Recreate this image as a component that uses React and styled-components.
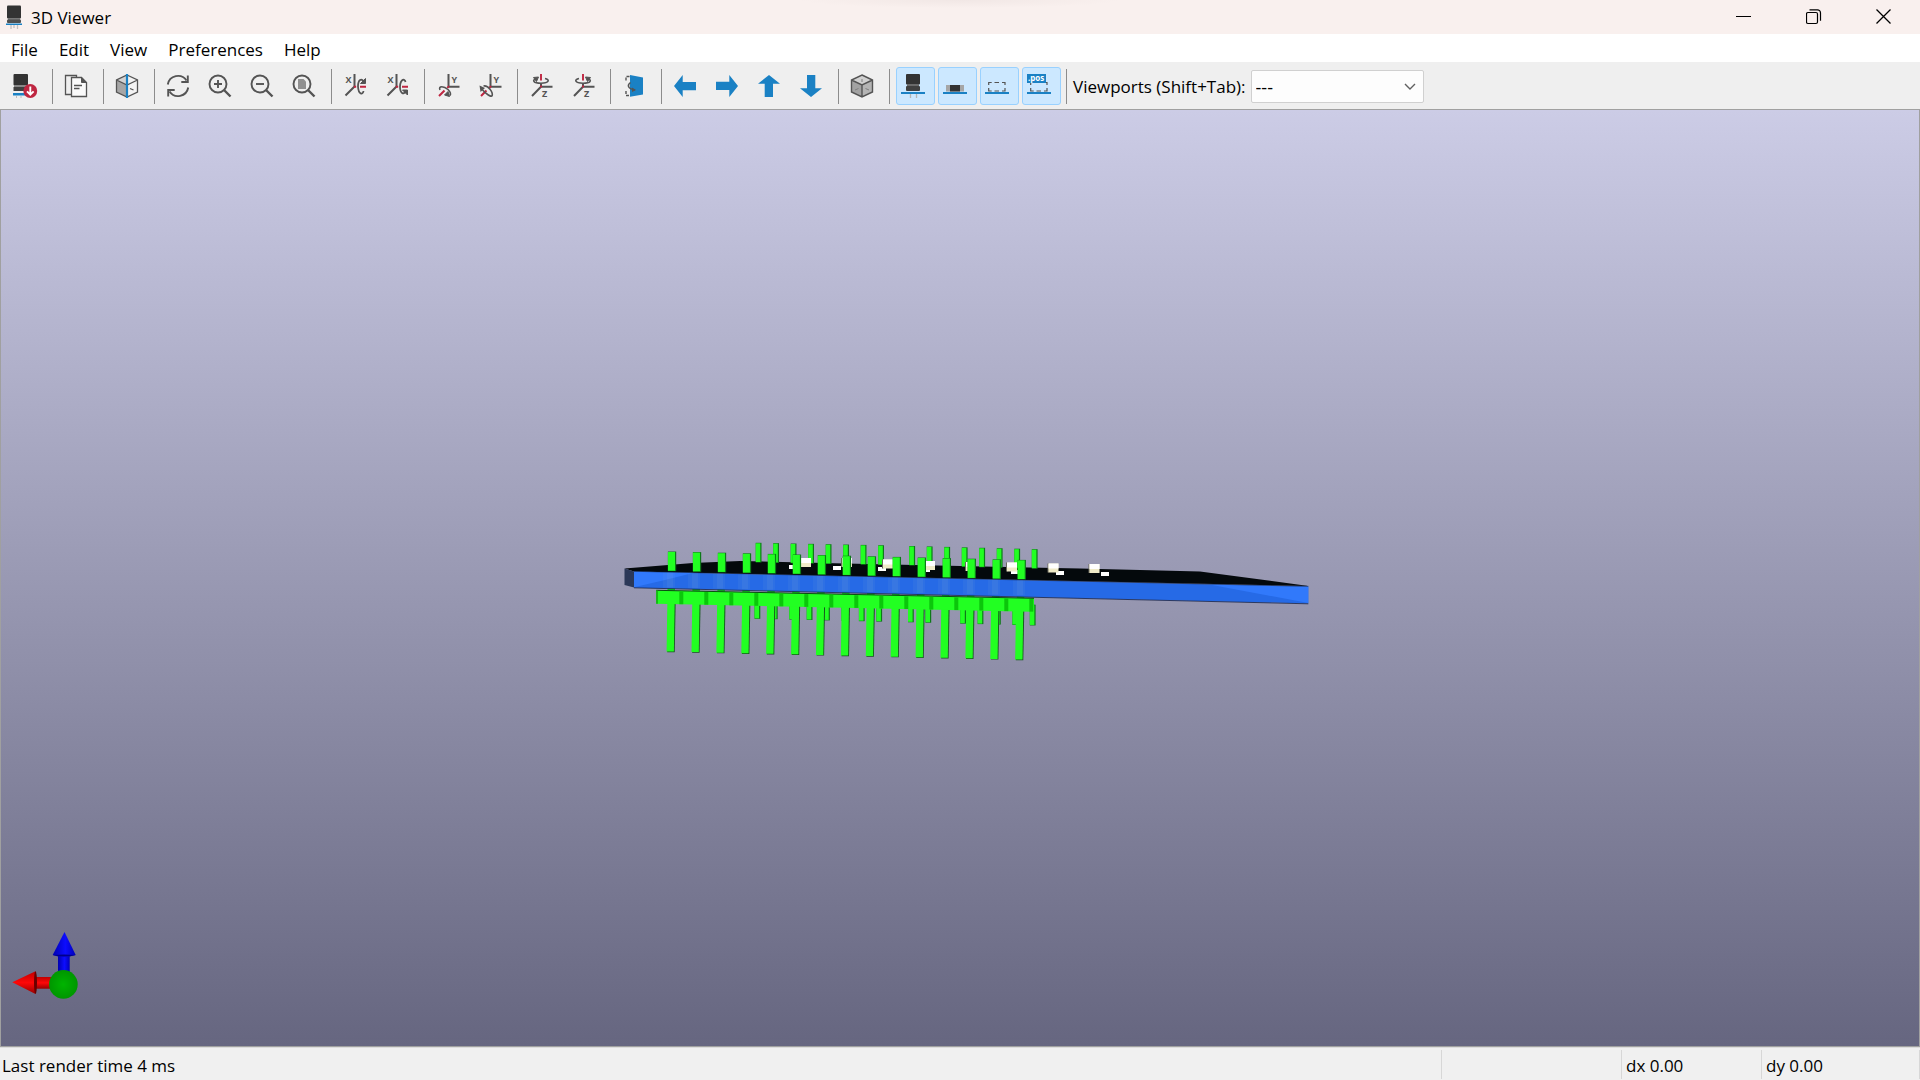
import React, { useState } from "react";
import styled, { createGlobalStyle } from "styled-components";

const INK = "#545454";
const BLUE = "#1a81c4";
const RED = "#bf2641";
const GREEN = "#22ff22";

const GlobalStyle = createGlobalStyle`
  * { box-sizing: border-box; }
  body { margin: 0; background: #f0f0f0; }
`;

const Window = styled.div`
  display: flex;
  flex-direction: column;
  height: 100vh;
  font-family: "Segoe UI", "Open Sans", "Noto Sans", sans-serif;
  font-size: 17px;
  line-height: 24px;
  color: #000;
`;

const TitleBar = styled.header`
  display: flex;
  align-items: center;
  height: 34px;
  padding: 0 1px 0 2px;
  background: radial-gradient(closest-side, #f1e7e5, #f9f0ee) center -8px / 320px 16px no-repeat #f9f0ee;
`;

const Title = styled.h1`
  flex: 1;
  margin: 0 0 0 5px;
  padding-top: 2px;
  font-size: 17px;
  font-weight: 400;
  line-height: 24px;
`;

const CaptionButton = styled.button`
  display: flex;
  align-items: center;
  justify-content: center;
  width: 70px;
  height: 34px;
  padding: 0;
  border: 0;
  background: transparent;
`;

const MenuBar = styled.nav`
  display: flex;
  height: 28px;
  background: #fff;
`;

const MenuItem = styled.button`
  padding: 4px 10px 0 11px;
  border: 0;
  background: transparent;
  font: inherit;
  color: inherit;
`;

const ToolBar = styled.div`
  display: flex;
  align-items: center;
  height: 47px;
  padding: 1px 8px 0;
  background: #efefef;
`;

const ToolButton = styled.button`
  display: flex;
  align-items: center;
  width: 39px;
  height: 38px;
  margin-right: 3px;
  padding: 0 0 0 4px;
  border: 1px solid ${(p) => (p.$on ? "#99d1ff" : "transparent")};
  border-radius: 3px;
  background: ${(p) => (p.$on ? "#cce8ff" : "transparent")};
`;

const Separator = styled.span`
  width: 1px;
  height: 35px;
  margin: 0 6px 0 2px;
  background: #8c8c8c;
`;

const ViewLabel = styled.label`
  margin-right: 5px;
  padding-top: 2px;
  white-space: nowrap;
`;

const SelectBox = styled.div`
  display: grid;
  align-items: center;
  width: 173px;
  & > * { grid-area: 1 / 1; }
  & > svg { justify-self: end; margin: 2px 8px 0 0; pointer-events: none; }
`;

const Select = styled.select`
  appearance: none;
  width: 100%;
  height: 33px;
  padding: 2px 28px 0 4px;
  border: 1px solid #d0d0d0;
  border-radius: 2px;
  background: #fdfdfd;
  font: inherit;
  font-size: 18px;
  color: inherit;
`;

const Canvas = styled.main`
  flex: 1;
  min-height: 0;
  border: 1px solid #a0a0a0;
  background: linear-gradient(#cccce6, #666680);
`;

const Scene = styled.svg`
  display: block;
  width: 100%;
  height: 100%;
`;

const StatusBar = styled.footer`
  display: flex;
  height: 33px;
  padding: 2px 0 1px;
  border-top: 1px solid #dcdcdc;
  background: #f0f0f0;
`;

const StatusField = styled.div`
  flex: ${(p) => (p.$width ? `0 0 ${p.$width}px` : "1")};
  padding: 5px 2px 0 ${(p) => (p.$width ? 4 : 2)}px;
  border-right: 1px solid #d7d7d7;
  line-height: 22px;
`;

const Icon = styled.svg`
  display: block;
  flex: none;
  overflow: visible;
`;

const AxisLetter = styled.text`
  font-family: "Open Sans", sans-serif;
  font-size: 9px;
  font-weight: 700;
  fill: ${INK};
`;

const PosText = styled.text`
  font-family: "Open Sans", sans-serif;
  font-size: 8px;
  font-weight: 700;
  fill: #fff;
`;

const Svg = ({ children }) => (
  <Icon width="24" height="24" viewBox="0 0 24 24" fill="none" aria-hidden="true">
    {children}
  </Icon>
);

const Capacitor = () => (
  <Svg>
    <path d="M9.5 20v4M15.5 20v4" stroke="#b4b4b4" strokeWidth="1.3" />
    <rect x="5" y="0" width="14" height="10.5" rx="1" fill="#333" />
    <rect x="6" y="10" width="12" height="2.5" fill="#6a6a6a" />
    <rect x="5" y="12" width="14" height="5" rx="1" fill="#404040" />
    <rect y="18" width="24" height="2" fill={BLUE} />
  </Svg>
);

const AppMark = () => (
  <Svg>
    <path d="M9 20v4M12 20v3M15.5 20v4" stroke="#c4c0c0" strokeWidth="1.3" />
    <rect x="5" y="0.5" width="14" height="13" rx="1" fill="#333" />
    <rect x="6" y="13" width="12" height="2" fill="#777" />
    <rect x="5" y="14.5" width="14" height="3.5" rx="1" fill="#505050" />
    <rect x="4" y="18.5" width="16" height="1.5" fill={BLUE} />
  </Svg>
);

const Reload = () => (
  <Svg>
    <path d="M3.5 22v2M8 22v2" stroke="#bdbdbd" />
    <rect x="0.5" y="0" width="14.5" height="11.5" rx="1" fill="#333" />
    <rect x="1" y="11" width="13" height="2.5" fill="#888" />
    <rect x="0.5" y="13" width="14" height="4" fill="#404040" />
    <rect x="0" y="19" width="13" height="2.5" fill={BLUE} />
    <circle cx="17.3" cy="17" r="6.9" fill={RED} />
    <path d="M17.3 12.5v7.5M14 17.3l3.3 3.4 3.3-3.4" stroke="#fff" strokeWidth="1.9" />
  </Svg>
);

const Copy = () => (
  <Svg>
    <path d="M7.5 20.5H1.5V1.5h11v2" stroke={INK} strokeWidth="1.3" />
    <path d="M7.5 3.5h10l5 5v14h-15z" fill="#fafafa" stroke={INK} strokeWidth="1.3" />
    <path d="M17.5 3.5v5h5z" fill={INK} stroke={INK} />
    <path d="M10 11.5h8M10 14.5h5.5" stroke={INK} strokeWidth="1.3" />
  </Svg>
);

const RaytraceCube = () => (
  <Svg>
    <path d="M12 1L1.5 6v12L12 23z" fill="#a6a6a6" />
    <path d="M12 1L1.5 6 12 11z" fill="#d2d2d2" />
    <path d="M12 1l10.5 5v12L12 23z" fill="#f3f3f3" />
    <path d="M12 1l10.5 5v12L12 23 1.5 18V6zM1.5 6L12 11l10.5-5M15 14.5l3.5 1.5" stroke={INK} strokeWidth="1.3" />
    <path d="M12 0v24" stroke={BLUE} strokeWidth="2.2" />
  </Svg>
);

const Refresh = () => (
  <Svg>
    <path d="M1.8 10.5A10.3 10.3 0 0 1 20.5 6.5M22.2 13.5A10.3 10.3 0 0 1 3.5 17.5" stroke={INK} strokeWidth="1.9" />
    <path d="M21.8 1.5V8H15.3M2.2 22.5V16H8.7" stroke={INK} strokeWidth="1.9" />
  </Svg>
);

const Zoom = ({ kind }) => (
  <Svg>
    <circle cx="10" cy="10" r="8.5" stroke={INK} strokeWidth="1.9" />
    <path d="M16 16l6.5 6.5" stroke={INK} strokeWidth="2.4" />
    {kind === "fit" ? (
      <path d="M6 5h5.5L14 7.5V15H6z" fill="#909090" />
    ) : (
      <path d={kind === "in" ? "M6 10h8M10 6v8" : "M6 10h8"} stroke={INK} strokeWidth="1.9" />
    )}
  </Svg>
);

const RotateX = ({ back }) => (
  <Svg>
    <AxisLetter x="2.5" y="9">X</AxisLetter>
    <path d="M11.5 0v12.5L2.5 21.5" stroke={INK} strokeWidth="2" />
    <path d="M10.8 12.7h2.4M17 12.7h6" stroke={RED} strokeWidth="1.9" />
    {back ? (
      <>
        <path d="M20.5 8C20 4.5 15.5 4.5 15 12.5c0 7 3.8 8.5 5.5 5" stroke={INK} strokeWidth="1.8" />
        <path d="M17.5 16h5v5z" fill={INK} stroke={INK} />
      </>
    ) : (
      <>
        <path d="M20.5 17C20 21 15.5 21 15 12.5c0-7 3.8-8.5 5.5-5" stroke={INK} strokeWidth="1.8" />
        <path d="M17.5 9.5h5v-5z" fill={INK} stroke={INK} />
      </>
    )}
  </Svg>
);

const RotateY = ({ back }) => (
  <Svg>
    <AxisLetter x="15.5" y="9">Y</AxisLetter>
    <path d="M12.5 0v12.7h11" stroke={INK} strokeWidth="2" />
    <path d="M3 22l5.5-5.5M11.3 13.9l1.8-1.8" stroke={RED} strokeWidth="2" />
    {back ? (
      <>
        <path d="M5.5 12c5-1 9.5 6.5 8.7 9.5-1 2.5-7-2.5-10-6" stroke={INK} strokeWidth="1.6" />
        <path d="M1.5 11.5l1 6.5 4.5-4z" fill={INK} />
      </>
    ) : (
      <>
        <path d="M4 16c-2-4.5 4-4 8-.5 2.5 2.5 3 4.5 2 6" stroke={INK} strokeWidth="1.6" />
        <path d="M8.5 21l3.5-3.5 1.5 5z" fill={INK} stroke={INK} />
      </>
    )}
  </Svg>
);

const RotateZ = ({ back }) => (
  <Svg>
    <AxisLetter x="13" y="23">Z</AxisLetter>
    <path d="M12 10v2.7h11.5M12 12.7L3 22" stroke={INK} strokeWidth="2" />
    <path d="M12 0v6.5M12 11.5v2" stroke={RED} strokeWidth="1.9" />
    <path
      d={back ? "M8 4.5C3 5.5 3.5 9.2 12 9.2c8 0 9-3.2 5-4.4" : "M16 4.5c5 1 4.5 4.7-4 4.7C4 9.2 3 6 7 4.8"}
      stroke={INK}
      strokeWidth="1.6"
    />
    <path d={back ? "M14.5 3l5 .5-3 4z" : "M9.5 3l-5 .5 3 4z"} fill={INK} stroke={INK} />
  </Svg>
);

const Flip = () => (
  <Svg>
    <path d="M7.5 2.5H4V7M4 17v4.5h3.5" stroke={INK} strokeWidth="1.4" strokeDasharray="3 1.5" />
    <path d="M8 1l13 2.5v17L8 22.8z" fill={BLUE} />
    <path d="M8.5 8.5C5 11 5.5 15 13 16" stroke={INK} strokeWidth="1.5" />
    <path d="M10 13.5l4 2.5-4 2z" fill={INK} />
  </Svg>
);

const Arrow = ({ turn = 0 }) => (
  <Svg>
    <path transform={`rotate(${turn} 12 12)`} d="M1 12L9.7 1v7H23v8.3H9.7V23z" fill={BLUE} />
  </Svg>
);

const OrthoCube = () => (
  <Svg>
    <path d="M12 1L1.5 6v12L12 23l10.5-5V6z" fill="#b4b4b4" />
    <path d="M12 1L1.5 6 12 11l10.5-5z" fill="#d0d0d0" />
    <path d="M1.5 6L12 11v12L1.5 18z" fill="#a2a2a2" />
    <path d="M12 1l10.5 5v12L12 23 1.5 18V6zM1.5 6L12 11l10.5-5M12 11v12" stroke={INK} strokeWidth="1.4" />
    <path d="M12 5v3M5 16l3.5-1.5M15.5 14.5L19 16" stroke="#808080" />
  </Svg>
);

const SmdPart = () => (
  <Svg>
    <rect x="3" y="11" width="18" height="6.5" fill="#a6a6a6" />
    <rect x="7" y="11" width="10" height="6.5" fill="#333" />
    <rect y="18" width="24" height="2" fill={BLUE} />
  </Svg>
);

const VirtualPart = ({ pos }) => (
  <Svg>
    <path
      d="M3.7 11V8.5h3M9.5 8.5h4.5M17 8.5h3V11M20 14v3h-3M14 17H9.5M6.7 17h-3v-3"
      stroke={INK}
      strokeWidth="1.2"
    />
    <rect y="18" width="24" height="2" fill={BLUE} />
    {pos && (
      <>
        <rect width="19" height="9" fill={BLUE} />
        <PosText x="1" y="7">.pos</PosText>
      </>
    )}
  </Svg>
);

const GROUPS = [
  [["Reload board", <Reload />]],
  [["Copy 3D image to clipboard", <Copy />]],
  [["Render with raytracing", <RaytraceCube />]],
  [
    ["Redraw", <Refresh />],
    ["Zoom in", <Zoom kind="in" />],
    ["Zoom out", <Zoom kind="out" />],
    ["Zoom to fit", <Zoom kind="fit" />],
  ],
  [
    ["Rotate X clockwise", <RotateX />],
    ["Rotate X counterclockwise", <RotateX back />],
  ],
  [
    ["Rotate Y clockwise", <RotateY />],
    ["Rotate Y counterclockwise", <RotateY back />],
  ],
  [
    ["Rotate Z clockwise", <RotateZ />],
    ["Rotate Z counterclockwise", <RotateZ back />],
  ],
  [["Flip board", <Flip />]],
  [
    ["Pan left", <Arrow />],
    ["Pan right", <Arrow turn={180} />],
    ["Pan up", <Arrow turn={90} />],
    ["Pan down", <Arrow turn={270} />],
  ],
  [["Orthographic projection", <OrthoCube />]],
];

const TOGGLES = [
  ["Through-hole models", <Capacitor />],
  ["SMD models", <SmdPart />],
  ["Virtual models", <VirtualPart />],
  ["Models not in position file", <VirtualPart pos />],
];

const range = (n) => Array.from({ length: n }, (_, i) => i);

const CHIPS = [
  [801, 558], [842, 558], [883, 559.5], [925, 561], [966, 562], [1007, 562.5], [1048.5, 563.5], [1089.5, 564],
];
const PADS = [
  [789, 565, 5], [833, 566, 8], [878, 567, 8], [925, 568, 5], [968, 569, 5], [1011, 570, 7], [1056, 571, 8], [1101, 572, 8],
];

const Pin = ({ x, top, bottom, width }) => (
  <g>
    <rect x={x} y={top - 0.5} width={width + 0.5} height={bottom - top + 1} fill="#0d7a18" />
    <rect x={x} y={top} width={width - 0.7} height={bottom - top} fill={GREEN} />
  </g>
);

const backRow = (start, top, bottom, step, pitch = 17.5) =>
  range(8).map((i) => (
    <Pin key={`${start}-${i}`} x={start + i * pitch} top={top + i * step} bottom={bottom + i * step} width={5.3} />
  ));

const Board = () => (
  <g>
    {backRow(754.5, 600, 618.3, 0.4, 17.4)}
    {backRow(908, 602, 621.8, 0.45, 17.4)}
    <path d="M624.5 568.5L693 563l47-2 105 2.5 235 5 120 3 108.5 14.5L634 571.5z" fill="#04090c" />
    {PADS.map(([x, y, w]) => (
      <rect key={x} x={x} y={y} width={w} height="4" fill="#fff" />
    ))}
    {backRow(755.7, 543.3, 562, 0.35)}
    {backRow(909.3, 546.5, 565, 0.45)}
    {CHIPS.map(([x, y]) => (
      <g key={x}>
        <rect x={x - 1} y={y} width="1.5" height="9" fill="#6b695c" />
        <rect x={x} y={y} width="10" height="9" fill="#f0ebc8" />
        <rect x={x} y={y} width="10" height="5" fill="#fff" />
      </g>
    ))}
    <path d="M624.5 568.5l9.5 3v16l-9.5-2.5z" fill="#2b3858" />
    {range(15).map((i) => (
      <Pin key={i} x={667.9 + i * 24.98} top={552 + i * 0.6} bottom={570.7 + i * 0.6} width={7.8} />
    ))}
    {range(15).map((i) => (
      <rect key={i} x={667.5 + i * 24.95} y={586 + i * 0.6} width="7.5" height="6" fill="#12c41a" />
    ))}
    <path d="M634 571.5l674.3 15v17L634 587.7z" fill="#266ae6" />
    <path d="M634 571.5l60 1.3-28 7-32 7.5zM1208 584.3l100.3 2.2v16.5z" fill="#3179fb" />
    <path d="M634 571.3l674.3 15" stroke="#0b1a38" strokeWidth="0.6" />
    <path d="M634 587.8l674.3 16" stroke="#1a2547" strokeWidth="0.8" />
    {range(15).map((i) => (
      <g key={i} fill="#78a5dc">
        <path d={`M${663 + i * 25} ${572.6 + i * 0.55}h12v15h-12z`} fillOpacity="0.1" />
        <path d={`M${667 + i * 25} ${572.6 + i * 0.55}h6v15h-6z`} fillOpacity="0.14" />
      </g>
    ))}
    {range(15).map((i) => (
      <g key={i}>
        <path d={`M${668.2 + i * 24.9} ${600.5 + i * 0.57}h7.5l-1 51.7h-7.5z`} fill="#17551d" />
        <path d={`M${667.4 + i * 24.9} ${600 + i * 0.57}h7.3l-0.8 51.5h-7.3z`} fill={GREEN} />
      </g>
    ))}
    <path d="M656.3 590.3L1034 598.3v13.5L656.3 603.8z" fill={GREEN} />
    <path d="M656.3 590.3L1034 598.3" stroke="#0a4d12" strokeWidth="1" />
    <path d="M657 590.3v13.5" stroke="#0da80d" strokeWidth="1.5" />
    {range(15).map((i) => (
      <rect key={i} x={679.3 + i * 25} y={591.5 + i * 0.53} width="4" height="12.7" fill="#0bc60b" />
    ))}
  </g>
);

const Gizmo = () => (
  <g>
    <defs>
      <linearGradient id="blueShade">
        <stop offset="0" stopColor="#0000b0" />
        <stop offset="0.55" stopColor="#0d0dff" />
        <stop offset="1" stopColor="#0000b8" />
      </linearGradient>
      <linearGradient id="redShade" x2="0" y2="1">
        <stop offset="0" stopColor="#c00000" />
        <stop offset="0.5" stopColor="#ff0808" />
        <stop offset="1" stopColor="#980000" />
      </linearGradient>
      <radialGradient id="greenShade">
        <stop offset="0" stopColor="#00b400" />
        <stop offset="1" stopColor="#009600" />
      </radialGradient>
    </defs>
    <rect x="58" y="953" width="11.7" height="20" fill="url(#blueShade)" />
    <path d="M64.5 932L75.7 955l-6 1.5H58L52.7 955z" fill="url(#blueShade)" />
    <path d="M52.7 955q11.5-1 23 0-11.5 3-23 0z" fill="#00008a" />
    <rect x="34" y="977" width="18" height="11.7" fill="url(#redShade)" />
    <path d="M12.3 982.3L35.5 971.3v22.7z" fill="url(#redShade)" />
    <ellipse cx="35.5" cy="982.6" rx="1.5" ry="11.4" fill="#6a0000" />
    <circle cx="63.4" cy="984.4" r="14.3" fill="url(#greenShade)" />
  </g>
);

export default function App() {
  const [on, setOn] = useState([true, true, true, true]);
  return (
    <Window>
      <GlobalStyle />
      <TitleBar>
        <AppMark />
        <Title>3D Viewer</Title>
        <CaptionButton aria-label="Minimize">
          <svg width="16" height="16" stroke="#000" fill="none"><path d="M0 7.5h15" /></svg>
        </CaptionButton>
        <CaptionButton aria-label="Restore">
          <svg width="16" height="16" stroke="#000" strokeWidth="1.2" fill="none">
            <rect x="0.5" y="3.5" width="11" height="11" rx="1.5" />
            <path d="M3.5 0.8h8a3 3 0 0 1 3 3v8" />
          </svg>
        </CaptionButton>
        <CaptionButton aria-label="Close">
          <svg width="16" height="16" stroke="#000" strokeWidth="1.3" fill="none"><path d="M0.5 0.5l14 14M14.5 0.5l-14 14" /></svg>
        </CaptionButton>
      </TitleBar>
      <MenuBar>
        {["File", "Edit", "View", "Preferences", "Help"].map((name) => (
          <MenuItem key={name}>{name}</MenuItem>
        ))}
      </MenuBar>
      <ToolBar role="toolbar" aria-label="Main toolbar">
        {GROUPS.map((group, g) => (
          <React.Fragment key={g}>
            {group.map(([name, icon]) => (
              <ToolButton key={name} aria-label={name}>{icon}</ToolButton>
            ))}
            <Separator />
          </React.Fragment>
        ))}
        {TOGGLES.map(([name, icon], i) => (
          <ToolButton
            key={name}
            aria-label={name}
            aria-pressed={on[i]}
            $on={on[i]}
            onClick={() => setOn(on.map((v, j) => (j === i ? !v : v)))}
          >
            {icon}
          </ToolButton>
        ))}
        <Separator />
        <ViewLabel htmlFor="viewports">Viewports (Shift+Tab):</ViewLabel>
        <SelectBox>
          <Select id="viewports">
            <option>---</option>
          </Select>
          <svg width="12" height="8" fill="none" stroke="#606060" strokeWidth="1.4"><path d="M1 1l5 5 5-5" /></svg>
        </SelectBox>
      </ToolBar>
      <Canvas>
        <Scene viewBox="1 110 1918 936" role="img" aria-label="Board model">
          <Board />
          <Gizmo />
        </Scene>
      </Canvas>
      <StatusBar>
        <StatusField>Last render time 4 ms</StatusField>
        <StatusField $width={180} />
        <StatusField $width={140}>dx 0.00</StatusField>
        <StatusField $width={158}>dy 0.00</StatusField>
      </StatusBar>
    </Window>
  );
}
